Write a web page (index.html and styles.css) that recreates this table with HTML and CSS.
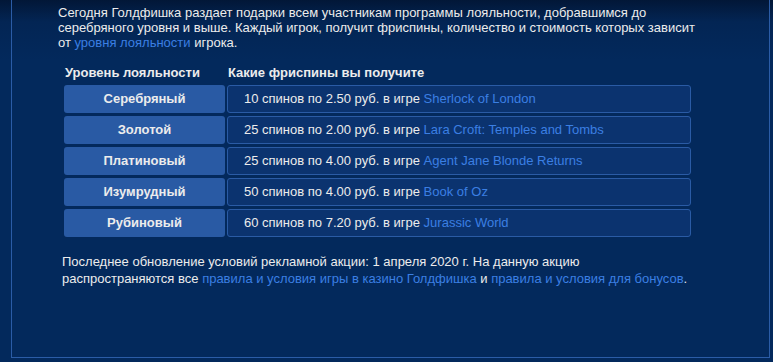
FILE: index.html
```html
<!DOCTYPE html>
<html lang="ru">
<head>
<meta charset="utf-8">
<link rel="stylesheet" href="styles.css">
</head>
<body>
<div class="panel">
  <p class="intro">Сегодня Голдфишка раздает подарки всем участникам программы лояльности, добравшимся до серебряного уровня и выше. Каждый игрок, получит фриспины, количество и стоимость которых зависит от <a href="#">уровня лояльности</a> игрока.</p>
  <div class="grid">
    <div class="head">Уровень лояльности</div>
    <div class="head">Какие фриспины вы получите</div>
    <div class="lvl">Серебряный</div>
    <div class="prize">10 спинов по 2.50 руб. в игре <a href="#">Sherlock of London</a></div>
    <div class="lvl">Золотой</div>
    <div class="prize">25 спинов по 2.00 руб. в игре <a href="#">Lara Croft: Temples and Tombs</a></div>
    <div class="lvl">Платиновый</div>
    <div class="prize">25 спинов по 4.00 руб. в игре <a href="#">Agent Jane Blonde Returns</a></div>
    <div class="lvl">Изумрудный</div>
    <div class="prize">50 спинов по 4.00 руб. в игре <a href="#">Book of Oz</a></div>
    <div class="lvl">Рубиновый</div>
    <div class="prize">60 спинов по 7.20 руб. в игре <a href="#">Jurassic World</a></div>
  </div>
  <p class="note">Последнее обновление условий рекламной акции: 1 апреля 2020 г. На данную акцию<br>распространяются все <a href="#">правила и условия игры в казино Голдфишка</a> и <a href="#">правила и условия для бонусов</a>.</p>
</div>
</body>
</html>
```
FILE: styles.css
```css
html, body {
  margin: 0;
  height: 100%;
}
body {
  background: linear-gradient(to bottom, #021737 0px, #032554 22px, #03295c 60px, #03295c 100%);
  font-family: "Liberation Sans", Arial, sans-serif;
  font-size: 13px;
  color: #ececec;
}
a {
  color: #3b7fe3;
  text-decoration: none;
}
.panel {
  margin-left: 11px;
  width: 759px;
  height: 358px;
  border: 1px solid #2b5ca6;
  border-top: none;
  padding: 5px 0 0 0;
  box-sizing: border-box;
}
.intro {
  margin: 0 0 0 46px;
  width: 645px;
  line-height: 15px;
}
.grid {
  display: grid;
  grid-template-columns: 161px 464px;
  grid-template-rows: 18px repeat(5, 28px);
  column-gap: 2px;
  row-gap: 3px;
  margin: 14px 0 0 52px;
}
.head {
  font-weight: bold;
  line-height: 18px;
  padding-left: 1px;
}
.lvl {
  background: #295aa4;
  border-radius: 3px;
  font-weight: bold;
  text-align: center;
  line-height: 28px;
}
.prize {
  background: #0b336f;
  border: 1px solid #2a5ba5;
  border-radius: 3px;
  padding-left: 16px;
  line-height: 26px;
}
.note {
  margin: 16px 0 0 50px;
  line-height: 17px;
}
```
